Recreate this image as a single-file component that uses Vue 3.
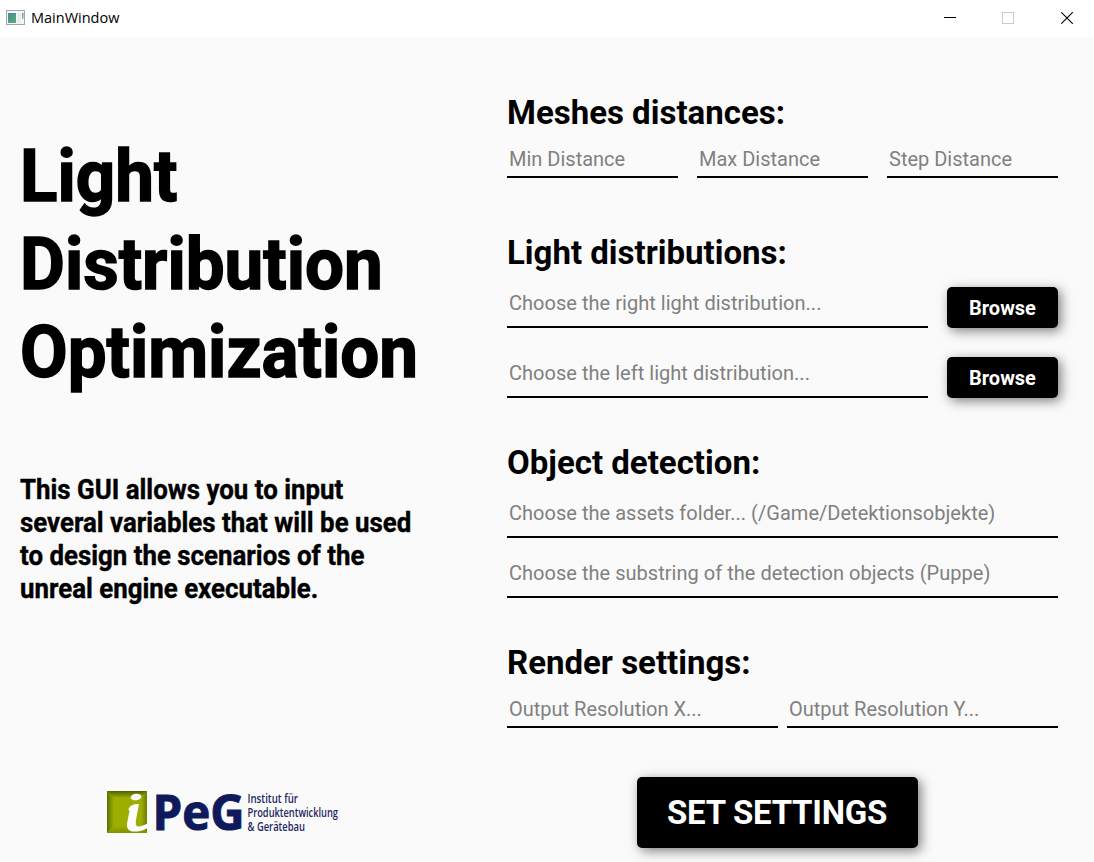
<script setup>
const sections = [
  {
    title: 'Meshes distances:',
    name: 'meshes',
    rows: [[{ text: 'Min Distance' }, { text: 'Max Distance' }, { text: 'Step Distance' }]],
  },
  {
    title: 'Light distributions:',
    name: 'lights',
    rows: [
      [{ text: 'Choose the right light distribution...', browse: true }],
      [{ text: 'Choose the left light distribution...', browse: true }],
    ],
  },
  {
    title: 'Object detection:',
    name: 'objects',
    rows: [
      [{ text: 'Choose the assets folder... (/Game/Detektionsobjekte)' }],
      [{ text: 'Choose the substring of the detection objects (Puppe)' }],
    ],
  },
  {
    title: 'Render settings:',
    name: 'render',
    rows: [[{ text: 'Output Resolution X...' }, { text: 'Output Resolution Y...' }]],
  },
]
</script>

<template>
  <div class="window">
    <header class="titlebar">
      <svg class="app-icon" width="20" height="16" viewBox="0 0 20 16">
        <defs>
          <linearGradient id="pane" x1="0" y1="0" x2="0.6" y2="1">
            <stop offset="0" stop-color="#4b8798" />
            <stop offset="1" stop-color="#58a87a" />
          </linearGradient>
          <linearGradient id="sliver" x1="0" y1="0" x2="0" y2="1">
            <stop offset="0" stop-color="#5b8fb0" />
            <stop offset="1" stop-color="#8cc4a4" />
          </linearGradient>
        </defs>
        <rect x="0.5" y="0.5" width="18" height="14" fill="#f4f6f7" stroke="#a0a6ab" />
        <rect x="2" y="3" width="8" height="10" fill="url(#pane)" />
        <rect x="11" y="3" width="4" height="10" fill="#e9ecee" />
        <rect x="16" y="3" width="1.5" height="6" fill="url(#sliver)" />
      </svg>
      <span class="title">MainWindow</span>
      <div class="controls">
        <svg width="12" height="12" viewBox="0 0 12 12"><path d="M0 5.5H12" stroke="#000" /></svg>
        <svg width="12" height="12" viewBox="0 0 12 12"><rect x="0.5" y="0.5" width="11" height="11" fill="none" stroke="#ccc" /></svg>
        <svg class="close" width="12" height="12" viewBox="0 0 12 12"><path d="M0.2 0.2L11.8 11.8M11.8 0.2L0.2 11.8" stroke="#000" stroke-width="1.1" /></svg>
      </div>
    </header>

    <main class="content">
      <aside class="intro">
        <h1>Light<br />Distribution<br />Optimization</h1>
        <p>This GUI allows you to input<br />several variables that will be used<br />to design the scenarios of the<br />unreal engine executable.</p>
        <svg class="logo" width="260" height="72" viewBox="0 -15 260 72">
          <defs>
            <linearGradient id="topEdge" x1="0" y1="0" x2="0" y2="1">
              <stop offset="0" stop-color="#4e6000" />
              <stop offset="1" stop-color="#9dae00" />
            </linearGradient>
            <linearGradient id="leftEdge" x1="0" y1="0" x2="1" y2="0">
              <stop offset="0" stop-color="#5d7000" />
              <stop offset="1" stop-color="#9dae00" />
            </linearGradient>
            <linearGradient id="rightEdge" x1="0" y1="0" x2="1" y2="0">
              <stop offset="0" stop-color="#9dae00" />
              <stop offset="1" stop-color="#6c7e00" />
            </linearGradient>
            <linearGradient id="bottomEdge" x1="0" y1="0" x2="0" y2="1">
              <stop offset="0" stop-color="#9dae00" />
              <stop offset="1" stop-color="#7f9100" />
            </linearGradient>
          </defs>
          <rect x="0" y="1" width="40" height="42" fill="#9dae00" />
          <path d="M0 1H40L33 8H7Z" fill="url(#topEdge)" />
          <path d="M0 1L7 8V36L0 43Z" fill="url(#leftEdge)" />
          <path d="M40 1V43L34 36V8Z" fill="url(#rightEdge)" />
          <path d="M0 43L7 36H34L40 43Z" fill="url(#bottomEdge)" />
          <ellipse cx="29" cy="7" rx="5.4" ry="3.2" fill="#fff" transform="rotate(-6 29 7)" />
          <path d="M21.3 20.3C22 15.8 26 14 32 14L29 30C28.3 34.5 29.2 36.8 32 36.6C34.5 36.3 37 35 40 33.8V38.2C36.5 40.3 32 41.6 27 41.6C20.6 41.6 19.4 37.5 20.3 32L22.4 21.4C22.6 20.3 22 20 21.3 20.3Z" fill="#fff" />
          <text class="brand" x="45.5" y="40" textLength="92" lengthAdjust="spacingAndGlyphs">PeG</text>
          <g class="caption">
            <text x="140.5" y="13" textLength="50.5" lengthAdjust="spacingAndGlyphs">Institut für</text>
            <text x="140.5" y="27" textLength="90.5" lengthAdjust="spacingAndGlyphs">Produktentwicklung</text>
            <text x="140.5" y="41" textLength="57.5" lengthAdjust="spacingAndGlyphs">&amp; Gerätebau</text>
          </g>
        </svg>
      </aside>

      <form class="settings" @submit.prevent>
        <section v-for="s in sections" :key="s.name" :class="s.name">
          <h2>{{ s.title }}</h2>
          <div v-for="(row, i) in s.rows" :key="i" class="row">
            <template v-for="f in row" :key="f.text">
              <input type="text" :placeholder="f.text" />
              <button v-if="f.browse" type="button" class="browse">Browse</button>
            </template>
          </div>
        </section>
        <button type="submit" class="submit">SET SETTINGS</button>
      </form>
    </main>
  </div>
</template>

<style>
html,
body {
  margin: 0;
  overflow: hidden;
}
</style>

<style scoped>
.window {
  width: 1094px;
  height: 862px;
  display: flex;
  flex-direction: column;
  background: #fafafa;
  font-family: Roboto, sans-serif;
  color: #000;
}
.titlebar {
  box-sizing: border-box;
  height: 37px;
  flex: none;
  display: flex;
  align-items: center;
  padding: 0 21px 2px 6px;
  background: #fff;
}
.app-icon {
  margin-top: 1px;
}
.title {
  margin-left: 5px;
  padding-top: 1px;
  font: 14.5px/20px "Open Sans", sans-serif;
}
.controls {
  margin-left: auto;
  display: flex;
  gap: 46px;
}
.close {
  margin-left: 1px;
}
.content {
  flex: 1;
  display: flex;
}
.intro {
  box-sizing: border-box;
  width: 507px;
  padding: 96px 0 0 20px;
}
h1 {
  margin: 0;
  font-size: 72px;
  line-height: 88px;
  font-weight: 700;
  white-space: nowrap;
  transform: scaleX(0.96);
  transform-origin: 0 0;
  -webkit-text-stroke: 1.5px #000;
}
p {
  margin: 76px 0 0;
  font-size: 28px;
  line-height: 33px;
  font-weight: 700;
  white-space: nowrap;
  transform: scaleX(0.923);
  transform-origin: 0 0;
  -webkit-text-stroke: 0.4px #000;
}
.logo {
  display: block;
  margin: 170px 0 0 87px;
}
.brand {
  font: 700 48px "Open Sans", sans-serif;
  fill: #0f1a5c;
  stroke: #0f1a5c;
  stroke-width: 1px;
}
.caption {
  font: 600 11.8px "Open Sans", sans-serif;
  fill: #1d2762;
}
.settings {
  width: 551px;
  display: flex;
  flex-direction: column;
}
h2 {
  margin: 0;
  height: 40px;
  font-size: 33px;
  line-height: 40px;
  font-weight: 700;
  white-space: nowrap;
}
.meshes {
  margin-top: 56px;
}
.lights {
  margin-top: 55px;
}
.objects,
.render {
  margin-top: 45px;
}
.row {
  display: flex;
  gap: 19px;
  align-items: flex-start;
}
.render .row {
  gap: 9px;
}
input {
  box-sizing: border-box;
  flex: 1;
  min-width: 0;
  height: 40px;
  padding: 4px 2px 0;
  border: 0;
  border-bottom: 2px solid #000;
  border-radius: 0;
  background: transparent;
  font: 20px Roboto, sans-serif;
  outline: none;
}
input::placeholder {
  color: #808080;
  opacity: 1;
}
.meshes .row,
.render .row {
  margin-top: 5px;
}
.lights .row {
  height: 41px;
  margin-top: 14px;
}
.lights .row + .row {
  margin-top: 29px;
}
.lights input {
  height: 50px;
  margin-top: -9px;
}
.lights input,
.objects input {
  padding-top: 2px;
  letter-spacing: 0.03px;
}
.objects .row {
  margin-top: 5px;
}
.objects input {
  height: 50px;
}
.objects .row + .row {
  margin-top: 10px;
}
button {
  padding: 0;
  border: 0;
  border-radius: 5px;
  background: #000;
  color: #fff;
  font: 700 20px Roboto, sans-serif;
  box-shadow: 3px 3px 12px rgba(0, 0, 0, 0.5);
}
.browse {
  width: 111px;
  height: 41px;
}
.submit {
  align-self: center;
  width: 281px;
  height: 71px;
  margin-top: 49px;
  margin-left: -10px;
  padding-right: 1px;
  font-size: 33px;
  letter-spacing: -0.25px;
}
</style>
